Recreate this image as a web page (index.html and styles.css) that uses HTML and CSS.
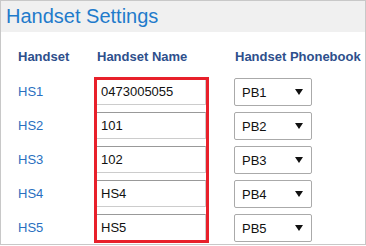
FILE: index.html
```html
<html>
    <head>
        <title>Handset Settings</title>
        <meta name="viewport" content="width=device-width, initial-scale=1.0">
        <link rel="stylesheet" href="styles.css">
    </head>
    <body>
        <div class="panel">
            <h2 class="panel-title">Handset Settings</h2>
            <div class="handset-grid">
                <div class="col-head">Handset</div>
                <div class="col-head">Handset Name</div>
                <div class="col-head">Handset Phonebook</div>

                <div class="hs-label">HS1</div>
                <div class="cell"><input type="text" class="name-input" value="0473005055" /></div>
                <div class="cell">
                    <div class="select-wrap">
                        <select class="pb-select"><option>PB1</option><option>PB2</option><option>PB3</option><option>PB4</option><option>PB5</option></select>
                    </div>
                </div>

                <div class="hs-label">HS2</div>
                <div class="cell"><input type="text" class="name-input" value="101" /></div>
                <div class="cell">
                    <div class="select-wrap">
                        <select class="pb-select"><option>PB1</option><option selected>PB2</option><option>PB3</option><option>PB4</option><option>PB5</option></select>
                    </div>
                </div>

                <div class="hs-label">HS3</div>
                <div class="cell"><input type="text" class="name-input" value="102" /></div>
                <div class="cell">
                    <div class="select-wrap">
                        <select class="pb-select"><option>PB1</option><option>PB2</option><option selected>PB3</option><option>PB4</option><option>PB5</option></select>
                    </div>
                </div>

                <div class="hs-label">HS4</div>
                <div class="cell"><input type="text" class="name-input" value="HS4" /></div>
                <div class="cell">
                    <div class="select-wrap">
                        <select class="pb-select"><option>PB1</option><option>PB2</option><option>PB3</option><option selected>PB4</option><option>PB5</option></select>
                    </div>
                </div>

                <div class="hs-label">HS5</div>
                <div class="cell"><input type="text" class="name-input" value="HS5" /></div>
                <div class="cell">
                    <div class="select-wrap">
                        <select class="pb-select"><option>PB1</option><option>PB2</option><option>PB3</option><option>PB4</option><option selected>PB5</option></select>
                    </div>
                </div>
            </div>
            <!-- highlight around the name column -->
            <div class="highlight"></div>
        </div>
    </body>
</html>
```

FILE: styles.css
```css
body {
    margin: 0;
    font-family: 'Liberation Sans', Arial, sans-serif;
    background-color: #fff;
}
.panel {
    position: relative;
    box-sizing: border-box;
    width: 366px;
    height: 245px;
    border: 1px solid #c8c8c8;
}
.panel-title {
    margin: 0;
    height: 31px;
    line-height: 31px;
    padding-left: 5px;
    background-color: #f0f0f0;
    color: #1f7bcb;
    font-size: 20px;
    font-weight: normal;
}
.handset-grid {
    display: grid;
    grid-template-columns: 78px 138px auto;
    grid-auto-rows: 34px;
    padding-left: 17px;
}
.col-head {
    box-sizing: border-box;
    height: 46px;
    padding-top: 17px;
    line-height: 16px;
    font-size: 13px;
    font-weight: bold;
    color: #2e4f8c;
}
.handset-grid .col-head:nth-child(2),
.handset-grid .col-head:nth-child(3) {
    padding-left: 1px;
}
.handset-grid > .col-head {
    grid-row: 1;
    align-self: start;
}
.handset-grid {
    grid-template-rows: 46px;
}
.hs-label {
    height: 27px;
    line-height: 27px;
    font-size: 13px;
    color: #2a6fbf;
}
.name-input {
    box-sizing: border-box;
    width: 110px;
    height: 27px;
    margin: 0;
    padding: 0 0 0 4px;
    border: 1px solid #cccccc;
    border-top-color: #999;
    border-left-color: #999;
    font-family: 'Liberation Sans', Arial, sans-serif;
    font-size: 13px;
    color: #111;
    outline: none;
}
.select-wrap {
    position: relative;
    width: 78px;
}
.pb-select {
    -webkit-appearance: none;
    appearance: none;
    box-sizing: border-box;
    width: 78px;
    height: 28px;
    margin: 0;
    padding: 0 0 0 7px;
    border: 1px solid #aaaaaa;
    border-radius: 2px;
    background-color: #fff;
    font-family: 'Liberation Sans', Arial, sans-serif;
    font-size: 13px;
    color: #111;
}
.select-wrap::after {
    content: "";
    position: absolute;
    right: 9px;
    top: 11px;
    border-left: 4px solid transparent;
    border-right: 4px solid transparent;
    border-top: 6px solid #111;
    pointer-events: none;
}
.highlight {
    position: absolute;
    left: 93px;
    top: 76px;
    width: 115px;
    height: 166px;
    box-sizing: border-box;
    border: 3px solid #e8202a;
    pointer-events: none;
}
```
